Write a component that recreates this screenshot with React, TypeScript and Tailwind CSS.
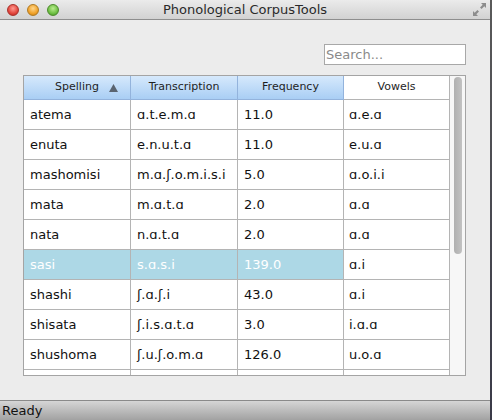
import React from "react";

const rows = [
  ["atema", "ɑ.t.e.m.ɑ", "11.0", "ɑ.e.ɑ"],
  ["enuta", "e.n.u.t.ɑ", "11.0", "e.u.ɑ"],
  ["mashomisi", "m.ɑ.ʃ.o.m.i.s.i", "5.0", "ɑ.o.i.i"],
  ["mata", "m.ɑ.t.ɑ", "2.0", "ɑ.ɑ"],
  ["nata", "n.ɑ.t.ɑ", "2.0", "ɑ.ɑ"],
  ["sasi", "s.ɑ.s.i", "139.0", "ɑ.i"],
  ["shashi", "ʃ.ɑ.ʃ.i", "43.0", "ɑ.i"],
  ["shisata", "ʃ.i.s.ɑ.t.ɑ", "3.0", "i.ɑ.ɑ"],
  ["shushoma", "ʃ.u.ʃ.o.m.ɑ", "126.0", "u.o.ɑ"],
  ["", "", "", ""],
];

const widths = ["w-[107px]", "w-[107px]", "w-[106px]", "w-[106px]"];

export default function App() {
  return (
    <div
      className="w-[492px] h-[420px] flex overflow-hidden"
      style={{ fontFamily: '"DejaVu Sans", "Liberation Sans", sans-serif' }}
    >
      <div className="w-[490px] h-[420px] flex flex-col bg-[#ececec]">
        {/* Title bar */}
        <div className="h-[20px] shrink-0 flex items-center relative bg-gradient-to-b from-[#ebebeb] to-[#d2d2d2] border-b border-[#8e8e8e]">
          <div className="flex items-center gap-[8px] pl-[7px]">
            <span className="w-[12px] h-[12px] rounded-full bg-[radial-gradient(circle_at_50%_35%,#ff9a90,#e2463d_60%,#b5241c)] border border-[#a8302a]" />
            <span className="w-[12px] h-[12px] rounded-full bg-[radial-gradient(circle_at_50%_35%,#ffd68a,#f0a22a_60%,#c27a12)] border border-[#b07a22]" />
            <span className="w-[12px] h-[12px] rounded-full bg-[radial-gradient(circle_at_50%_35%,#b9ec8e,#6fc044_60%,#3f8f22)] border border-[#4c8a2c]" />
          </div>
          <div className="absolute inset-x-0 top-0 h-[19px] flex items-center justify-center text-[13px] text-[#2a2a2a] pointer-events-none">
            Phonological CorpusTools
          </div>
          <svg className="absolute right-[3px] top-[2px]" width="15" height="15" viewBox="0 0 15 15">
            <path d="M9 1 H14 V6 L12.3 4.3 L9.6 7 L8 5.4 L10.7 2.7 Z" fill="#8c8c8c" />
            <path d="M6 14 H1 V9 L2.7 10.7 L5.4 8 L7 9.6 L4.3 12.3 Z" fill="#8c8c8c" />
          </svg>
        </div>

        {/* Content */}
        <div className="flex-1 flex flex-col">
          <div className="flex justify-end pr-[24px] pt-[24px]">
            <div className="w-[142px] h-[21px] bg-white border border-[#a8a8a8] flex items-center pl-[1px] text-[13px] text-[#8a8a8a]">
              Search...
            </div>
          </div>

          <div className="ml-[23px] mt-[10px] w-[443px] h-[301px] border border-[#a4a4a4] bg-white flex overflow-hidden">
            <div className="w-[426px] flex flex-col">
              {/* Header */}
              <div className="flex h-[24px] shrink-0 text-[11px] text-[#1e1e1e]">
                {["Spelling", "Transcription", "Frequency"].map((h, i) => (
                  <div
                    key={h}
                    className={`${widths[i]} h-[24px] relative flex items-center justify-center bg-gradient-to-b from-[#d6e9fc] to-[#a9cef4] border-r border-b border-[#93b3dc]`}
                  >
                    {h}
                    {i === 0 && (
                      <svg className="absolute right-[12px] top-[8px]" width="9" height="8" viewBox="0 0 9 8">
                        <path d="M4.5 0 L9 8 H0 Z" fill="#5a6470" />
                      </svg>
                    )}
                  </div>
                ))}
                <div className="w-[106px] h-[24px] flex items-center justify-center bg-white border-r border-b border-[#b4b4b4]">
                  Vowels
                </div>
              </div>
              {/* Rows */}
              {rows.map((r, ri) => {
                const sel = ri === 5;
                return (
                  <div key={ri} className="flex h-[30px] shrink-0 text-[13px]">
                    {r.map((c, ci) => (
                      <div
                        key={ci}
                        className={`${widths[ci]} h-[30px] flex items-center border-r border-b border-[#b4b4b4] ${
                          ci === 3 ? "pl-[5px]" : "pl-[6px]"
                        } ${sel && ci < 3 ? "bg-[#add8e6] text-white" : "bg-white text-[#111]"}`}
                      >
                        {c}
                      </div>
                    ))}
                  </div>
                );
              })}
            </div>
            {/* Scrollbar */}
            <div className="w-[15px] bg-[#f7f7f7] pt-[1px] flex justify-center">
              <div className="w-[8px] h-[177px] rounded-full bg-gradient-to-r from-[#b0b0b0] to-[#c2c2c2]" />
            </div>
          </div>
        </div>

        {/* Status bar */}
        <div className="h-[20px] shrink-0 border-t border-[#8a8a8a] bg-gradient-to-b from-[#d6d6d6] to-[#a2a2a2] flex items-center pl-[2px] text-[13px] text-[#111]">
          Ready
        </div>
      </div>
      <div className="w-[2px] h-[420px] bg-gradient-to-b from-[#5a5a5a] to-[#3a3a48]" />
    </div>
  );
}
